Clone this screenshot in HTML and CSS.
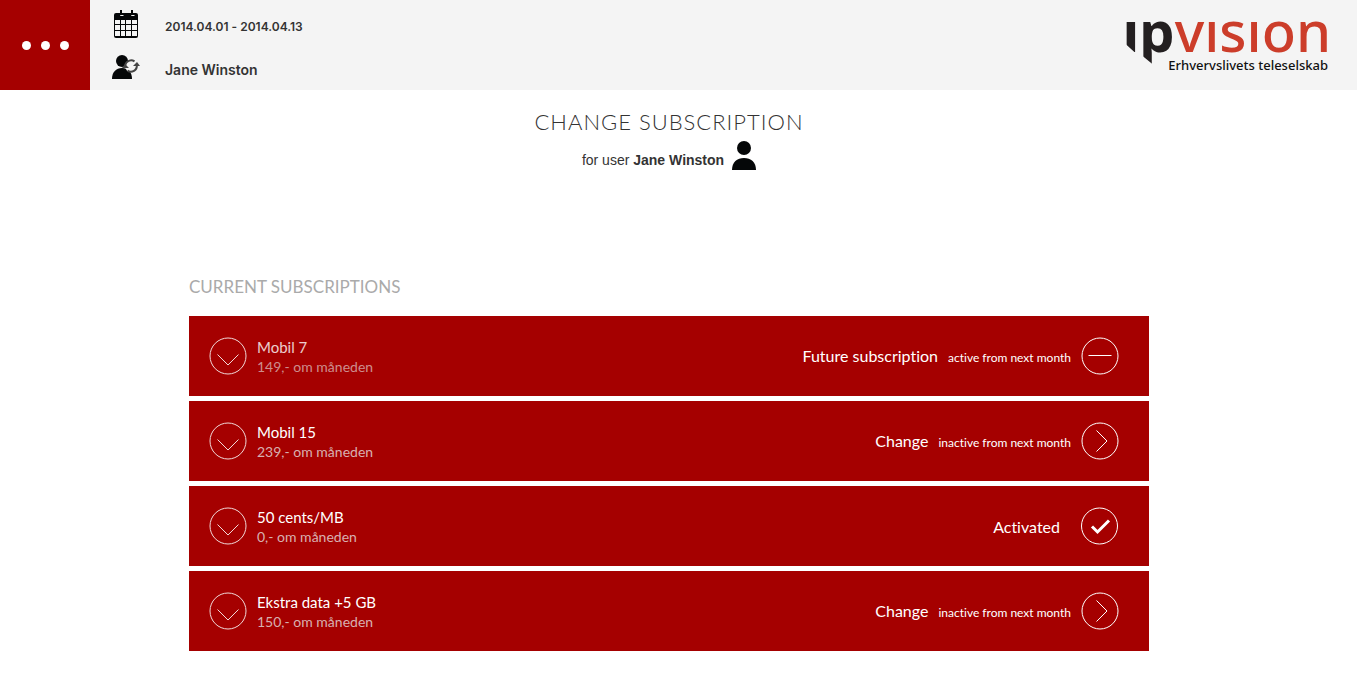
FILE: index.html
```html
<!DOCTYPE html>
<html lang="en">
<head>
<meta charset="utf-8">
<meta name="viewport" content="width=device-width, initial-scale=1">
<title>Change subscription</title>
<link rel="stylesheet" href="styles.css">
</head>
<body>
<svg width="0" height="0" class="defs" aria-hidden="true">
  <symbol id="down" viewBox="0 0 38 38"><circle cx="19" cy="19" r="18"/><path d="M8.500 17.500 19 28 29.500 17.500"/></symbol>
  <symbol id="next" viewBox="0 0 38 38"><circle cx="19" cy="19" r="18"/><path d="M15.500 8.500 26 19 15.500 29.500"/></symbol>
  <symbol id="minus" viewBox="0 0 38 38"><circle cx="19" cy="19" r="18"/><path d="M7.500 18.500H30.500"/></symbol>
  <symbol id="check" viewBox="0 0 38 38"><circle cx="18.500" cy="19" r="18"/><path d="M11 19.500 16.500 25 28 13.500" stroke-width="3"/></symbol>
</svg>
<header class="topbar">
  <button class="menu" type="button" aria-label="Menu"><i></i><i></i><i></i></button>
  <div class="context">
    <button class="context-item period" type="button">
      <svg width="30" height="30" viewBox="0 0 30 30" aria-hidden="true">
        <path d="M3 6a2 2 0 0 1 2-2h20a2 2 0 0 1 2 2v4H3z"/>
        <path d="M9.500 3v3.500h3M20.500 3v3.500h3" stroke="#f4f4f4" stroke-width="1" fill="none"/>
        <path d="M10 1v5M21 1v5" stroke="#050708" stroke-width="2" fill="none"/>
        <path d="M3 9h24v18a2 2 0 0 1-2 2H5a2 2 0 0 1-2-2z"/>
        <path fill="#f4f4f4" d="M4 11h5v4H4zM10 11h4v4h-4zM15 11h5v4h-5zM21 11h5v4h-5zM4 16h5v5H4zM10 16h4v5h-4zM15 16h5v5h-5zM21 16h5v5h-5zM4 22h5v5H4zM10 22h4v5h-4zM15 22h5v5h-5zM21 22h5v5h-5z"/>
      </svg>
      <span>2014.04.01 - 2014.04.13</span>
    </button>
    <button class="context-item person" type="button">
      <svg width="30" height="30" viewBox="0 0 30 30" aria-hidden="true">
        <circle cx="11" cy="9" r="6"/>
        <path d="M1 27c0-7 4-11 10-11s10 4 10 11z"/>
        <circle cx="20" cy="14" r="6" fill="#f4f4f4"/>
        <path d="M14.500 16A6 6 0 0 1 23.500 9.300M25.800 13A6 6 0 0 1 16.500 18.700" fill="none" stroke="#444" stroke-width="2"/>
        <path d="M11 16l3-4 4 4zM22 14l4-4 3 4z" fill="#444"/>
      </svg>
      <span>Jane Winston</span>
    </button>
  </div>
  <a class="logo" href="#" aria-label="ipvision Erhvervslivets teleselskab">
    <span class="wordmark"><b>ıp</b><span>vısıon</span></span>
    <span class="tagline">Erhvervslivets teleselskab</span>
  </a>
</header>
<main class="page">
  <h1>CHANGE SUBSCRIPTION</h1>
  <p class="for-user"><span>for user <strong>Jane Winston</strong></span>
    <svg width="24" height="30" viewBox="0 0 24 30" aria-hidden="true"><circle cx="12" cy="8" r="7"/><path d="M0 30c0-8 5-12 12-12s12 4 12 12z"/></svg>
  </p>
  <section class="subscriptions">
    <h2>CURRENT SUBSCRIPTIONS</h2>
    <ul>
      <li class="row future">
        <button class="round toggle" type="button" aria-label="Show details of Mobil 7"><svg><use href="#down"/></svg></button>
        <div class="plan"><h3>Mobil 7</h3><p>149,- om måneden</p></div>
        <div class="status"><span>Future subscription</span><small>active from next month</small></div>
        <button class="round" type="button" aria-label="Future subscription"><svg><use href="#minus"/></svg></button>
      </li>
      <li class="row">
        <button class="round toggle" type="button" aria-label="Show details of Mobil 15"><svg><use href="#down"/></svg></button>
        <div class="plan"><h3>Mobil 15</h3><p>239,- om måneden</p></div>
        <div class="status"><span>Change</span><small>inactive from next month</small></div>
        <button class="round" type="button" aria-label="Change Mobil 15"><svg><use href="#next"/></svg></button>
      </li>
      <li class="row active">
        <button class="round toggle" type="button" aria-label="Show details of 50 cents/MB"><svg><use href="#down"/></svg></button>
        <div class="plan"><h3>50 cents/MB</h3><p>0,- om måneden</p></div>
        <div class="status"><span>Activated</span></div>
        <button class="round" type="button" aria-label="Activated"><svg><use href="#check"/></svg></button>
      </li>
      <li class="row">
        <button class="round toggle" type="button" aria-label="Show details of Ekstra data +5 GB"><svg><use href="#down"/></svg></button>
        <div class="plan"><h3>Ekstra data +5 GB</h3><p>150,- om måneden</p></div>
        <div class="status"><span>Change</span><small>inactive from next month</small></div>
        <button class="round" type="button" aria-label="Change Ekstra data +5 GB"><svg><use href="#next"/></svg></button>
      </li>
    </ul>
  </section>
</main>
</body>
</html>
```
FILE: styles.css
```css
* { box-sizing: border-box; }
body { margin: 0; background: #fff; color: #333; font-family: Lato, "Liberation Sans", sans-serif; font-variant-ligatures: none; }
h1, h2, h3, p, ul { margin: 0; padding: 0; font-weight: 400; }
ul { list-style: none; }
button { border: 0; padding: 0; background: none; color: inherit; font: inherit; cursor: pointer; }
svg { display: block; flex: none; }
.defs { position: absolute; }

.topbar { display: flex; min-height: 90px; background: #f4f4f4; }
.menu { display: flex; align-items: center; justify-content: center; gap: 10px; width: 90px; background: #a50000; }
.menu i { width: 9px; height: 9px; border-radius: 50%; background: #fff; }
.context { display: flex; flex-direction: column; gap: 13px; padding: 9px 21px 8px; }
.context-item { display: flex; align-items: center; gap: 24px; font-family: Inter, sans-serif; font-weight: 600; line-height: 24px; }
.context-item svg { fill: #050708; }
.context-item span { padding-top: 6px; }
.period { font-size: 12px; }
.person { font-size: 14px; }
.logo { display: flex; flex-direction: column; align-items: flex-end; margin-left: auto; padding: 8px 26px 0 0; font-family: "Noto Sans", sans-serif; text-decoration: none; color: #231f20; }
.wordmark { display: flex; font-size: 56px; line-height: 44px; height: 48px; }
.wordmark b { font-weight: 700; clip-path: polygon(0 0, 60px 0, 60px 46px, 31px 46px, 31px 57px, 20px 48px, 20px 46px, 14px 46px, 3px 36px, 0 36px); }
.wordmark span { color: #cc3d2a; font-weight: 500; }
.tagline { margin-right: 3px; font-size: 13px; line-height: 18px; font-weight: 500; color: #111; }

.page { padding: 18px 19px 26px 0; }
h1 { text-align: center; font-size: 22px; line-height: 28px; font-weight: 300; letter-spacing: 1px; }
.for-user { display: flex; justify-content: center; align-items: center; gap: 8px; margin-top: 4px; font: 14px/20px "Liberation Sans", sans-serif; }
.for-user span { padding-top: 10px; }
.for-user svg { fill: #050708; }
.subscriptions { max-width: 960px; margin: 106px auto 0; }
h2 { color: #aaa; font-size: 17px; line-height: 22px; }
.subscriptions ul { display: flex; flex-direction: column; gap: 5px; margin-top: 18px; }
.row { display: flex; align-items: center; gap: 10px; min-height: 80px; padding: 0 30px 0 20px; background: #a50000; color: #fff; }
.round svg { width: 38px; height: 38px; fill: none; stroke: #fff; stroke-width: 1; }
.toggle { opacity: .85; }
.plan { flex: 1; padding-top: 2px; }
h3 { font-size: 15px; line-height: 20px; }
.plan p { font-size: 14px; line-height: 20px; color: #d8b0b0; }
.future .plan { opacity: .8; }
.status { display: flex; align-items: baseline; gap: 10px; padding-top: 2px; font-size: 16px; line-height: 20px; }
.status small { font-size: 12px; }
.active .status { margin-right: 11px; }
```
